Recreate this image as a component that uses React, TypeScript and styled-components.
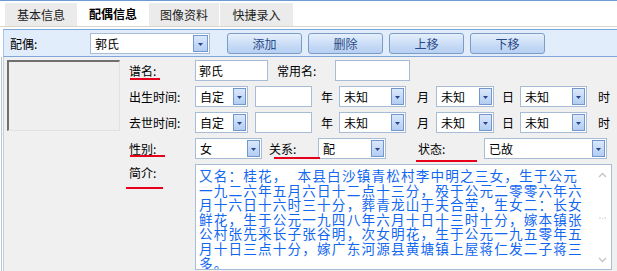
import React from 'react';
import styled, { createGlobalStyle } from 'styled-components';

const GlobalStyle = createGlobalStyle`
  html, body {
    margin: 0;
    padding: 0;
    background: #ffffff;
    overflow: hidden;
  }
  body {
    font-family: "Noto Sans CJK SC", "Noto Sans", sans-serif;
    font-size: 12px;
    color: #000;
  }
`;

const Frame = styled.div`
  width: 617px;
  height: 271px;
  overflow: hidden;
  box-sizing: border-box;
  border-top: 1px solid #6f9bd2;
  background: #ffffff;
  display: flex;
  flex-direction: column;
`;

const TabStrip = styled.div`
  display: flex;
  align-items: flex-end;
  gap: 1px;
  height: 25px;
  padding-left: 5px;
  border-bottom: 1px solid #d9d5cd;
  flex-shrink: 0;
`;

const Tab = styled.div<{ $w: number; $active?: boolean }>`
  width: ${p => p.$w}px;
  height: ${p => (p.$active ? 25 : 23)}px;
  display: flex;
  align-items: center;
  justify-content: center;
  padding-top: ${p => (p.$active ? 1 : 0)}px;
  box-sizing: border-box;
  background: ${p => (p.$active ? '#ffffff' : '#ebebeb')};
  font-weight: ${p => (p.$active ? 700 : 400)};
  color: ${p => (p.$active ? '#000' : '#222')};
  font-size: 12px;
  line-height: 14px;
`;

const Toolbar = styled.div`
  margin-top: 2px;
  margin-left: 3px;
  height: 28px;
  box-sizing: border-box;
  background: #e2edfb;
  border-top: 1px solid #7ea6d9;
  border-bottom: 1px solid #7ea6d9;
  border-left: 1px solid #a9c6ea;
  display: flex;
  align-items: center;
  padding-left: 6px;
  flex-shrink: 0;
`;

const ToolLabel = styled.div`
  width: 80px;
  font-size: 12px;
`;

const ToolButton = styled.div<{ $first?: boolean }>`
  width: 75px;
  height: 21px;
  box-sizing: border-box;
  margin-left: ${p => (p.$first ? 17 : 6)}px;
  border: 1px solid #7c9cc6;
  border-radius: 3px;
  background: linear-gradient(#e6f0fd, #c9dcf6 55%, #b6cff2);
  display: flex;
  align-items: center;
  justify-content: center;
  color: #284a86;
  font-size: 12px;
`;

const Combo = styled.div<{ $w: number }>`
  width: ${p => p.$w}px;
  height: 21px;
  box-sizing: border-box;
  border: 1px solid #a9bcd6;
  background: #fff;
  display: flex;
  align-items: center;
  padding-left: 4px;
  padding-right: 1px;
  font-size: 12px;
  flex-shrink: 0;
`;

const ComboText = styled.span`
  flex: 1;
  white-space: nowrap;
`;

const DropButton = styled.div<{ $big?: boolean }>`
  width: ${p => (p.$big ? 15 : 13)}px;
  height: 17px;
  box-sizing: border-box;
  border: 1px solid #7296d0;
  background: linear-gradient(#dbe8fb, #b3cdf2);
  display: flex;
  align-items: center;
  justify-content: center;
  padding-top: 2px;
`;

const Arrow = () => (
  <svg width="5" height="3" viewBox="0 0 5 3">
    <path d="M0 0H5L2.5 3Z" fill="#24478c" />
  </svg>
);

const Main = styled.div`
  flex: 1;
  margin-left: 1px;
  border-left: 1px solid #b6c9e0;
  box-shadow: inset 1px 0 0 #fafafa, inset 2px 0 0 #cdcdcd;
  background: #f0f0f0;
  display: flex;
  align-items: flex-start;
  padding: 3px 0 0 5px;
`;

const Photo = styled.div`
  width: 113px;
  height: 71px;
  box-sizing: border-box;
  border-top: 2px solid #707070;
  border-left: 2px solid #707070;
  border-right: 1px solid #e2e2e2;
  border-bottom: 1px solid #e2e2e2;
  background: #efefef;
  margin-right: 9px;
  flex-shrink: 0;
`;

const Form = styled.div`
  display: flex;
  flex-direction: column;
  gap: 5px;
`;

const Row = styled.div<{ $top?: boolean }>`
  position: relative;
  display: flex;
  align-items: ${p => (p.$top ? 'flex-start' : 'center')};
  height: ${p => (p.$top ? 'auto' : '21px')};
`;

const Label = styled.div<{ $w: number; $pl?: number; $pt?: number }>`
  width: ${p => p.$w}px;
  padding-left: ${p => p.$pl ?? 0}px;
  padding-top: ${p => p.$pt ?? 0}px;
  box-sizing: border-box;
  font-size: 12px;
  line-height: 16px;
  white-space: nowrap;
  flex-shrink: 0;
`;

const Mark = styled.div<{ $left: number; $top: number; $w: number }>`
  position: absolute;
  left: ${p => p.$left}px;
  top: ${p => p.$top}px;
  width: ${p => p.$w}px;
  height: 2px;
  background: #e6001c;
`;

const TextBox = styled.div<{ $w: number }>`
  width: ${p => p.$w}px;
  height: 21px;
  box-sizing: border-box;
  border: 1px solid #a9bcd6;
  background: #fff;
  padding-left: 3px;
  display: flex;
  align-items: center;
  font-size: 12px;
  flex-shrink: 0;
`;

const Memo = styled.div`
  position: relative;
  width: 417px;
  height: 106px;
  box-sizing: border-box;
  border: 1px solid #a9bcd6;
  background: #fff;
  padding: 3px 0 0 3px;
  overflow: hidden;
  color: #1167f0;
  font-size: 13.6px;
  letter-spacing: 1.17px;
  line-height: 14.6px;
`;

const MemoLine = styled.div`
  white-space: nowrap;
  height: 14.6px;
`;

const Spacer = styled.span`
  display: inline-block;
  width: 10px;
`;

const ScrollBar = styled.div`
  position: absolute;
  right: 0;
  top: 0;
  bottom: 0;
  width: 17px;
  display: flex;
  flex-direction: column;
  align-items: center;
  justify-content: space-between;
  padding: 7px 0 6px;
  box-sizing: border-box;
  background: #fff;
`;

const Chevron = ({ up }: { up?: boolean }) => (
  <svg width="9" height="6" viewBox="0 0 9 6">
    <path d={up ? 'M1 5L4.5 1.5L8 5' : 'M1 1L4.5 4.5L8 1'} fill="none" stroke="#c4c4c4" strokeWidth="1.4" />
  </svg>
);

const Grip = () => (
  <svg width="7" height="4" viewBox="0 0 7 4">
    <path d="M1 1L1 3M3.5 2L3.5 3M6 1L6 3" stroke="#cfcfcf" strokeWidth="1" />
  </svg>
);

const DropCombo = ({ w, text, big }: { w: number; text: string; big?: boolean }) => (
  <Combo $w={w}>
    <ComboText>{text}</ComboText>
    <DropButton $big={big}>
      <Arrow />
    </DropButton>
  </Combo>
);

const memoLines = [
  '一九二六年五月六日十二点十三分，殁于公元二零零六年六',
  '月十六日十六时三十分，葬青龙山于夫合茔，生女二：长女',
  '鲜花，生于公元一九四八年六月十日十三时十分，嫁本镇张',
  '公村张先采长子张谷明，次女明花，生于公元一九五零年五',
  '月十日三点十分，嫁广东河源县黄塘镇上屋蒋仁发二子蒋三',
  '多。',
];

const DateRow = ({ label }: { label: string }) => (
  <Row>
    <Label $w={66}>{label}</Label>
    <DropCombo w={53} text="自定" />
    <Label $w={7} />
    <TextBox $w={57} />
    <Label $w={27} $pl={9}>年</Label>
    <DropCombo w={67} text="未知" />
    <Label $w={30} $pl={11}>月</Label>
    <DropCombo w={58} text="未知" />
    <Label $w={26} $pl={8}>日</Label>
    <DropCombo w={67} text="未知" />
    <Label $w={24} $pl={11}>时</Label>
  </Row>
);

export default function App() {
  return (
    <>
      <GlobalStyle />
      <Frame>
        <TabStrip>
          <Tab $w={72}>基本信息</Tab>
          <Tab $w={70} $active>配偶信息</Tab>
          <Tab $w={70}>图像资料</Tab>
          <Tab $w={73}>快捷录入</Tab>
        </TabStrip>

        <Toolbar>
          <ToolLabel>配偶:</ToolLabel>
          <DropCombo w={120} text="郭氏" big />
          <ToolButton $first>添加</ToolButton>
          <ToolButton>删除</ToolButton>
          <ToolButton>上移</ToolButton>
          <ToolButton>下移</ToolButton>
        </Toolbar>

        <Main>
          <Photo />
          <Form>
            <Row>
              <Label $w={66}>谱名:</Label>
              <Mark $left={1} $top={18} $w={30} />
              <TextBox $w={73}>郭氏</TextBox>
              <Label $w={67} $pl={9}>常用名:</Label>
              <TextBox $w={75} />
            </Row>

            <DateRow label="出生时间:" />
            <DateRow label="去世时间:" />

            <Row>
              <Label $w={66}>性别:</Label>
              <Mark $left={1} $top={17} $w={35} />
              <DropCombo w={67} text="女" />
              <Label $w={56} $pl={7}>关系:</Label>
              <Mark $left={145} $top={19} $w={46} />
              <DropCombo w={68} text="配" />
              <Label $w={98} $pl={32}>状态:</Label>
              <Mark $left={287} $top={22} $w={61} />
              <DropCombo w={123} text="已故" />
            </Row>

            <Row $top>
              <Label $w={66} $pt={1}>简介:</Label>
              <Mark $left={-3} $top={23} $w={37} />
              <Memo>
                <MemoLine>
                  又名：桂花，<Spacer />本县白沙镇青松村李中明之三女，生于公元
                </MemoLine>
                {memoLines.map((l, i) => (
                  <MemoLine key={i}>{l}</MemoLine>
                ))}
                <ScrollBar>
                  <Chevron up />
                  <Grip />
                  <Chevron />
                </ScrollBar>
              </Memo>
            </Row>
          </Form>
        </Main>
      </Frame>
    </>
  );
}
